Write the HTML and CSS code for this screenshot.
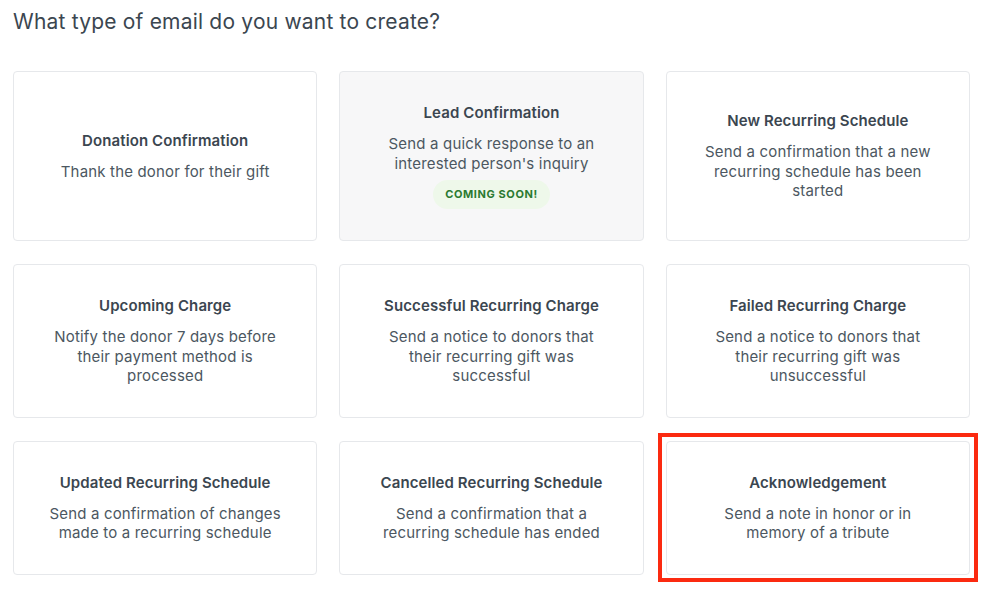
FILE: index.html
```html
<!DOCTYPE html>
<html>
<head>
    <meta charset="UTF-8">
    <title>Create email</title>
    <link rel="stylesheet" href="styles.css">
</head>
<body>

    <h1 class="page_title">What type of email do you want to create?</h1>

    <div class="type_grid">
        <div class="type_card">
            <div class="type_name">Donation Confirmation</div>
            <div class="type_desc">Thank the donor for their gift</div>
        </div>
        <div class="type_card disabled">
            <div class="type_name">Lead Confirmation</div>
            <div class="type_desc">Send a quick response to an interested person's inquiry</div>
            <span class="soon_badge">Coming soon!</span>
        </div>
        <div class="type_card">
            <div class="type_name">New Recurring Schedule</div>
            <div class="type_desc">Send a confirmation that a new recurring schedule has been started</div>
        </div>

        <div class="type_card">
            <div class="type_name">Upcoming Charge</div>
            <div class="type_desc">Notify the donor 7 days before their payment method is processed</div>
        </div>
        <div class="type_card">
            <div class="type_name">Successful Recurring Charge</div>
            <div class="type_desc">Send a notice to donors that their recurring gift was successful</div>
        </div>
        <div class="type_card">
            <div class="type_name">Failed Recurring Charge</div>
            <div class="type_desc">Send a notice to donors that their recurring gift was unsuccessful</div>
        </div>

        <div class="type_card">
            <div class="type_name">Updated Recurring Schedule</div>
            <div class="type_desc">Send a confirmation of changes made to a recurring schedule</div>
        </div>
        <div class="type_card">
            <div class="type_name">Cancelled Recurring Schedule</div>
            <div class="type_desc">Send a confirmation that a recurring schedule has ended</div>
        </div>
        <div class="type_card highlighted">
            <div class="type_name">Acknowledgement</div>
            <div class="type_desc">Send a note in honor or in memory of a tribute</div>
        </div>
    </div>

</body>
</html>
```

FILE: styles.css
```css
html{
    background:#fff;
}
body{
    margin:0;
    padding:10px 14px 14px 13px;
    min-height:566px;
    font-family:Inter, "Noto Sans", sans-serif;
    color:#3b4650;
    background:#fff;
}
.page_title{
    margin:0 0 37px;
    font-size:21px;
    line-height:24px;
    font-weight:400;
    letter-spacing:.2px;
    color:#3b4650;
}
.type_grid{
    display:grid;
    grid-template-columns:repeat(3, 1fr);
    gap:23px 22px;
}
.type_card{
    position:relative;
    display:flex;
    flex-direction:column;
    align-items:center;
    justify-content:center;
    text-align:center;
    padding:31px 33px;
    border:1px solid #e6e8eb;
    border-radius:4px;
    background:#fff;
}
.type_card.disabled{
    background:#f7f7f8;
}
/* red marker box drawn over the selected card */
.type_card.highlighted:after{
    content:"";
    position:absolute;
    left:-9px;
    top:-9px;
    right:-9px;
    bottom:-8px;
    border:4px solid #fb2a10;
}
.type_name{
    font-size:15px;
    line-height:20px;
    font-weight:600;
    letter-spacing:.1px;
    color:#3b4650;
    margin-bottom:11px;
}
.type_desc{
    font-size:15px;
    line-height:19.5px;
    letter-spacing:.17px;
    color:#4c5761;
}
.soon_badge{
    margin-top:7px;
    padding:0 12px;
    height:29px;
    line-height:29px;
    border-radius:15px;
    background:#eef8ea;
    color:#2b7a31;
    font-size:11px;
    font-weight:700;
    letter-spacing:.6px;
    text-transform:uppercase;
}
```
